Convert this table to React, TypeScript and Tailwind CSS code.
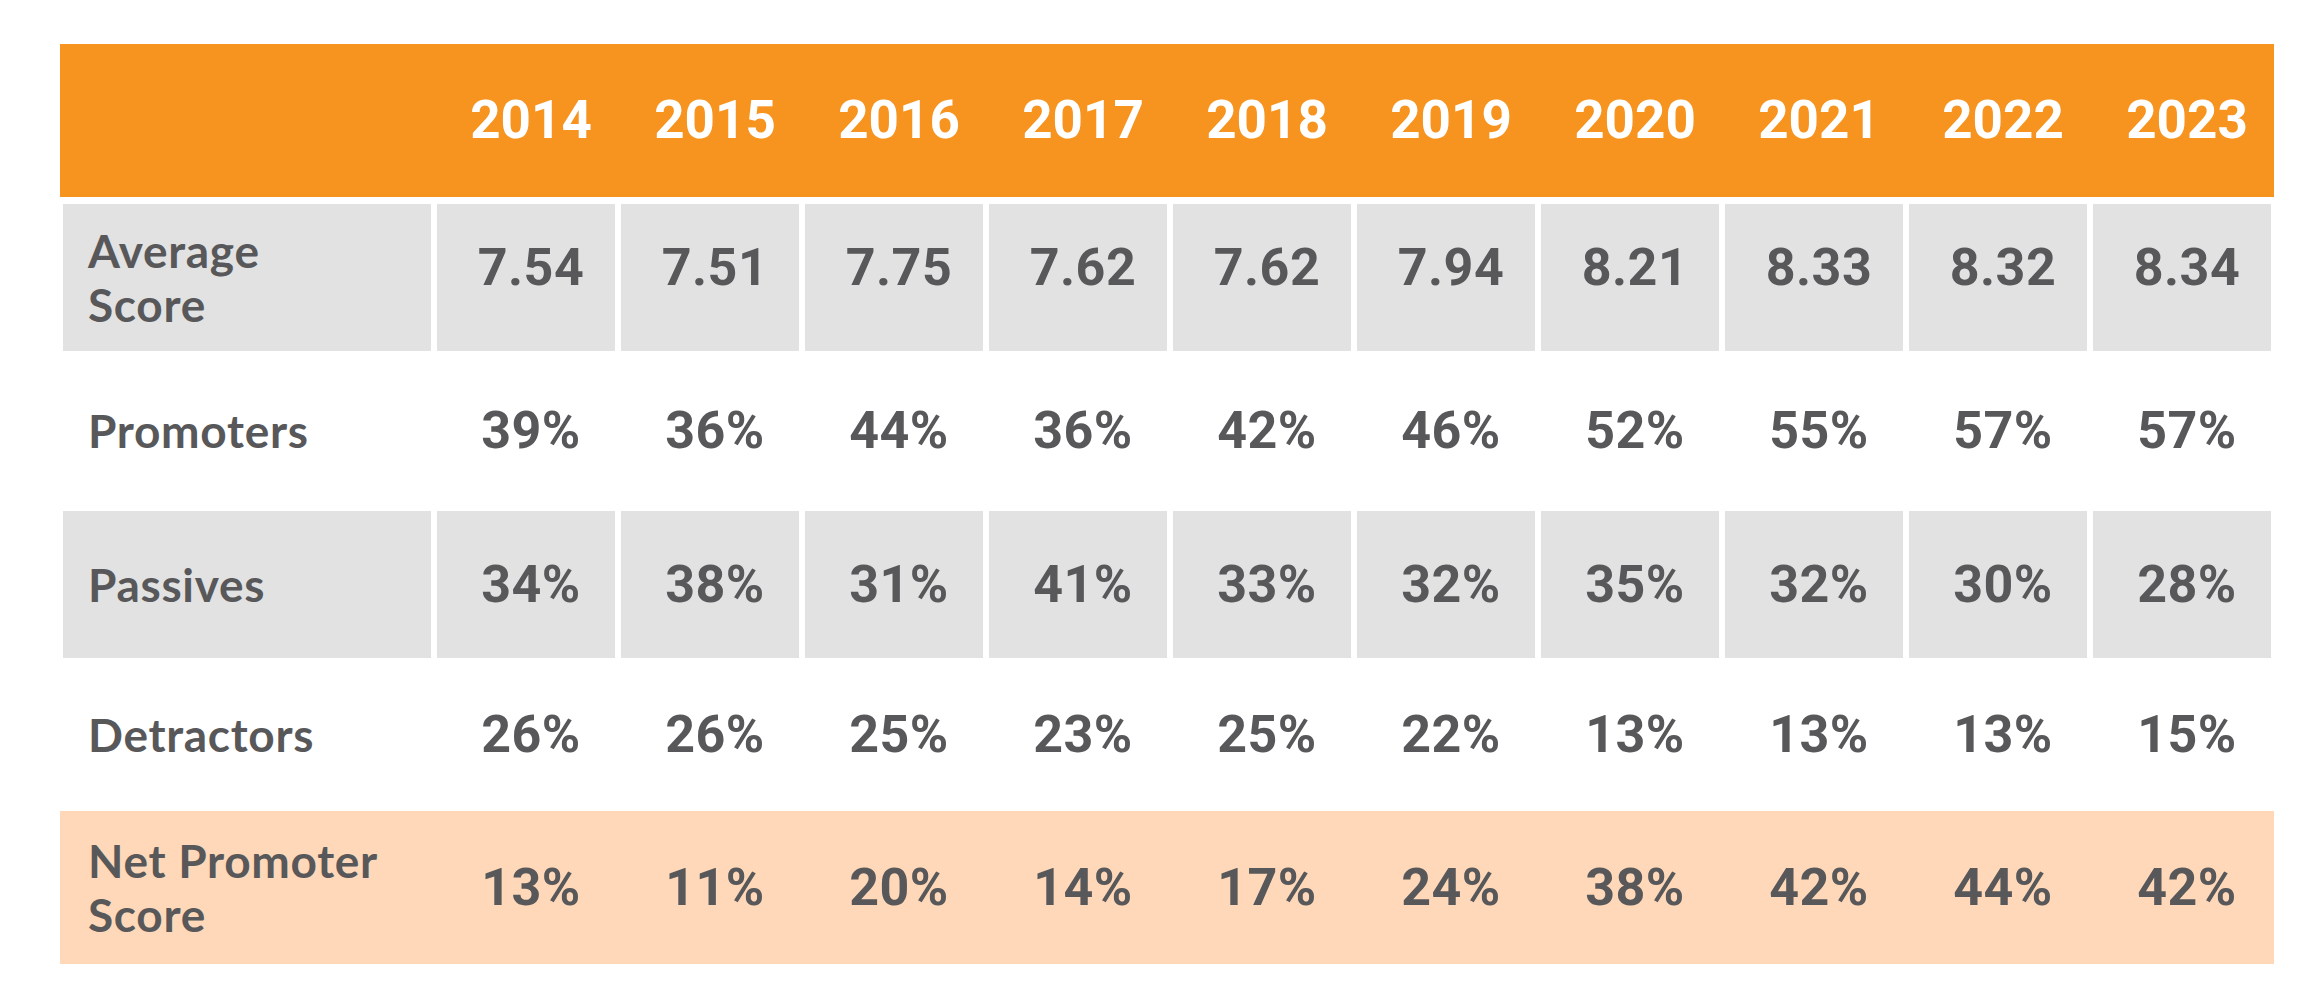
import React from 'react';

const years = ['2014', '2015', '2016', '2017', '2018', '2019', '2020', '2021', '2022', '2023'];

const rows = [
  { label: ['Average', 'Score'], values: ['7.54', '7.51', '7.75', '7.62', '7.62', '7.94', '8.21', '8.33', '8.32', '8.34'], kind: 'gray', h: 'h-[147px]', lift: true },
  { label: ['Promoters'], values: ['39%', '36%', '44%', '36%', '42%', '46%', '52%', '55%', '57%', '57%'], kind: 'white', h: 'h-[160px]' },
  { label: ['Passives'], values: ['34%', '38%', '31%', '41%', '33%', '32%', '35%', '32%', '30%', '28%'], kind: 'gray', h: 'h-[147px]' },
  { label: ['Detractors'], values: ['26%', '26%', '25%', '23%', '25%', '22%', '13%', '13%', '13%', '15%'], kind: 'white', h: 'h-[153px]' },
  { label: ['Net Promoter', 'Score'], values: ['13%', '11%', '20%', '14%', '17%', '24%', '38%', '42%', '44%', '42%'], kind: 'peach', h: 'h-[153px]' },
];

const grid = 'grid grid-cols-[368px_repeat(10,178px)] gap-x-[6px] px-[3px]';
const num = "font-['Roboto',sans-serif] font-bold text-[52px] leading-none";
const lbl = "font-['Lato',sans-serif] font-bold text-[46px] tracking-[0.7px] leading-[54px] text-[#58585a]";

export default function App() {
  return (
    <div className="w-[2324px] h-[995px] bg-white overflow-hidden">
      <div className="ml-[60px] pt-[44px] w-[2214px]">
        <div className={grid + ' h-[153px] bg-[#f6941f] items-center'}>
          <div />
          {years.map((y) => (
            <div key={y} className={num + ' text-white text-center pl-[10px] text-[53px]'}>{y}</div>
          ))}
        </div>
        <div className="h-[7px]" />
        {rows.map((r, i) => {
          const cellBg = r.kind === 'gray' ? 'bg-[#e1e2e1]' : '';
          const rowBg = r.kind === 'peach' ? 'bg-[#fed8b8]' : 'bg-white';
          return (
            <div key={i} className={grid + ' ' + r.h + ' ' + rowBg}>
              <div className={cellBg + ' flex flex-col justify-center pl-[25px] ' + lbl}>
                {r.label.map((l) => (
                  <span key={l}>{l}</span>
                ))}
              </div>
              {r.values.map((v, j) => (
                <div
                  key={j}
                  className={
                    cellBg +
                    ' flex items-center justify-center pl-[10px] text-[#58585a] tracking-[0.5px] ' +
                    num +
                    (r.lift ? ' pb-[20px]' : '')
                  }
                >
                  {v}
                </div>
              ))}
            </div>
          );
        })}
      </div>
    </div>
  );
}
